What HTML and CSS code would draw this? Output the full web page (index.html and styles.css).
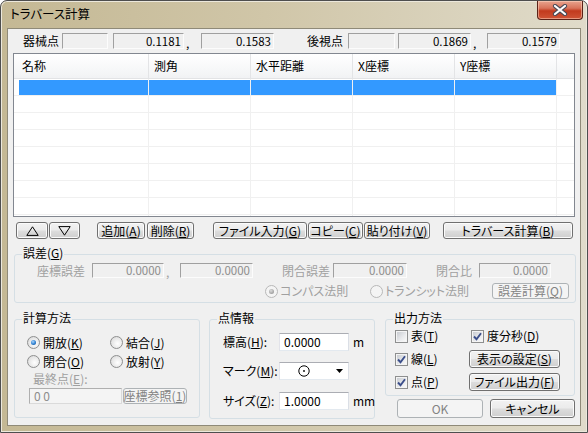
FILE: index.html
```html
<!DOCTYPE html>
<html lang="ja">
<head>
<meta charset="utf-8">
<title>トラバース計算</title>
<link rel="stylesheet" href="styles.css">
</head>
<body>
<div class="window">
  <div class="titlebar">
    <span class="title">トラバース計算</span>
    <div class="close">
      <svg width="16" height="12" viewBox="0 0 16 12"><path d="M3 2 L13 10 M13 2 L3 10" stroke="#4a4a55" stroke-width="4.2" stroke-linecap="round"/><path d="M3 2 L13 10 M13 2 L3 10" stroke="#fff" stroke-width="2.2" stroke-linecap="round"/></svg>
    </div>
  </div>
  <div class="client">
    <div class="toprow">
      <span class="lbl l1">器械点</span>
      <span class="sbox w46"></span>
      <span class="sbox w71 ml5">0.1181</span>
      <span class="comma">,</span>
      <span class="sbox w73">0.1583</span>
      <span class="lbl l2">後視点</span>
      <span class="sbox w47"></span>
      <span class="sbox w73 ml3">0.1869</span>
      <span class="comma c2">,</span>
      <span class="sbox w73">0.1579</span>
    </div>

    <div class="list">
      <div class="lhead">
        <div class="hc c1">名称</div>
        <div class="hc c2w">測角</div>
        <div class="hc c2w">水平距離</div>
        <div class="hc c2w">X座標</div>
        <div class="hc c2w">Y座標</div>
        <div class="hc c6"></div>
      </div>
      <div class="lrow selected">
        <div class="cell c1"><div class="sel first"></div></div>
        <div class="cell c2w"><div class="sel"></div></div>
        <div class="cell c2w"><div class="sel"></div></div>
        <div class="cell c2w"><div class="sel"></div></div>
        <div class="cell c2w"><div class="sel"></div></div>
        <div class="cell c6"></div>
      </div>
      <div class="lrow"><div class="cell c1"></div><div class="cell c2w"></div><div class="cell c2w"></div><div class="cell c2w"></div><div class="cell c2w"></div><div class="cell c6"></div></div>
      <div class="lrow"><div class="cell c1"></div><div class="cell c2w"></div><div class="cell c2w"></div><div class="cell c2w"></div><div class="cell c2w"></div><div class="cell c6"></div></div>
      <div class="lrow"><div class="cell c1"></div><div class="cell c2w"></div><div class="cell c2w"></div><div class="cell c2w"></div><div class="cell c2w"></div><div class="cell c6"></div></div>
      <div class="lrow"><div class="cell c1"></div><div class="cell c2w"></div><div class="cell c2w"></div><div class="cell c2w"></div><div class="cell c2w"></div><div class="cell c6"></div></div>
      <div class="lrow"><div class="cell c1"></div><div class="cell c2w"></div><div class="cell c2w"></div><div class="cell c2w"></div><div class="cell c2w"></div><div class="cell c6"></div></div>
      <div class="lrow"><div class="cell c1"></div><div class="cell c2w"></div><div class="cell c2w"></div><div class="cell c2w"></div><div class="cell c2w"></div><div class="cell c6"></div></div>
      <div class="lrow"><div class="cell c1"></div><div class="cell c2w"></div><div class="cell c2w"></div><div class="cell c2w"></div><div class="cell c2w"></div><div class="cell c6"></div></div>
      <div class="lrow"><div class="cell c1"></div><div class="cell c2w"></div><div class="cell c2w"></div><div class="cell c2w"></div><div class="cell c2w"></div><div class="cell c6"></div></div>
    </div>

    <div class="btnrow">
      <span class="btn b-up"><svg width="13" height="10" viewBox="0 0 13 10"><path d="M6.5 0.8 L12.2 9.4 H0.8 Z" fill="none" stroke="#000" stroke-width="1"/></svg></span>
      <span class="btn b-down"><svg width="13" height="10" viewBox="0 0 13 10"><path d="M6.5 9.2 L12.2 0.6 H0.8 Z" fill="none" stroke="#000" stroke-width="1"/></svg></span>
      <span class="btn b-add">追加(<u>A</u>)</span>
      <span class="btn b-del">削除(<u>R</u>)</span>
      <span class="btn b-file">ファイル入力(<u>G</u>)</span>
      <span class="btn b-copy">コピー(<u>C</u>)</span>
      <span class="btn b-paste">貼り付け(<u>V</u>)</span>
      <span class="btn b-calc">トラバース計算(<u>B</u>)</span>
    </div>

    <div class="group g-err">
      <span class="legend">誤差(<u>G</u>)</span>
      <div class="errrow1">
        <span class="dlbl w70">座標誤差</span>
        <span class="sbox dis w72 ml7">0.0000</span>
        <span class="comma dcomma">,</span>
        <span class="sbox dis w73">0.0000</span>
        <span class="dlbl w77">閉合誤差</span>
        <span class="sbox dis w74 ml3">0.0000</span>
        <span class="dlbl w65">閉合比</span>
        <span class="sbox dis w72 ml7">0.0000</span>
      </div>
      <div class="errrow2">
        <span class="ritem ri-compass"><span class="radio checked disabled"></span><span class="dtext">コンパス法則</span></span>
        <span class="ritem ri-transit"><span class="radio disabled"></span><span class="dtext">トランシット法則</span></span>
        <span class="btn disabled b-errcalc">誤差計算(<u>Q</u>)</span>
      </div>
    </div>

    <div class="bottom">
      <div class="group g-calc">
        <span class="legend">計算方法</span>
        <div class="rrow">
          <span class="ritem ri-a"><span class="radio checked"></span>開放(<u>K</u>)</span>
          <span class="ritem"><span class="radio"></span>結合(<u>J</u>)</span>
        </div>
        <div class="rrow">
          <span class="ritem ri-a"><span class="radio"></span>閉合(<u>O</u>)</span>
          <span class="ritem"><span class="radio"></span>放射(<u>Y</u>)</span>
        </div>
        <div class="lastlbl">最終点(<u>E</u>):</div>
        <div class="lastrow">
          <span class="tbox dis-tbox">0 0</span>
          <span class="btn disabled b-ref">座標参照(<u>1</u>)</span>
        </div>
      </div>

      <div class="group g-pt">
        <span class="legend">点情報</span>
        <div class="prow">
          <span class="plbl">標高(<u>H</u>):</span>
          <span class="tbox">0.0000</span>
          <span class="unit">m</span>
        </div>
        <div class="prow pr2">
          <span class="plbl">マーク(<u>M</u>):</span>
          <span class="tbox select">
            <svg class="mark" width="12" height="12" viewBox="0 0 12 12"><circle cx="6" cy="6" r="5.2" fill="none" stroke="#000" stroke-width="1"/><circle cx="6" cy="6" r="0.9" fill="#000"/></svg>
            <svg class="arrow" width="7" height="4" viewBox="0 0 7 4"><path d="M0 0 H7 L3.5 4 Z" fill="#000"/></svg>
          </span>
        </div>
        <div class="prow pr3">
          <span class="plbl">サイズ(<u>Z</u>):</span>
          <span class="tbox">1.0000</span>
          <span class="unit">mm</span>
        </div>
      </div>

      <div class="colc">
        <div class="group g-out">
          <span class="legend">出力方法</span>
          <div class="outgrid">
            <span class="citem"><span class="check"></span>表(<u>T</u>)</span>
            <span class="citem"><span class="check on"><svg width="9" height="9" viewBox="0 0 9 9"><path d="M1 4.5 L3.5 7.2 L8 1.2" fill="none" stroke="#3b4e8a" stroke-width="1.9"/></svg></span>度分秒(<u>D</u>)</span>
            <span class="citem"><span class="check on"><svg width="9" height="9" viewBox="0 0 9 9"><path d="M1 4.5 L3.5 7.2 L8 1.2" fill="none" stroke="#3b4e8a" stroke-width="1.9"/></svg></span>線(<u>L</u>)</span>
            <span class="btn b-disp">表示の設定(<u>S</u>)</span>
            <span class="citem"><span class="check on"><svg width="9" height="9" viewBox="0 0 9 9"><path d="M1 4.5 L3.5 7.2 L8 1.2" fill="none" stroke="#3b4e8a" stroke-width="1.9"/></svg></span>点(<u>P</u>)</span>
            <span class="btn b-disp">ファイル出力(<u>F</u>)</span>
          </div>
        </div>
        <div class="okrow">
          <span class="btn disabled b-ok">OK</span>
          <span class="btn b-cancel">キャンセル</span>
        </div>
      </div>
    </div>
  </div>
</div>
</body>
</html>
```
FILE: styles.css
```css
* { box-sizing: border-box; }
html, body { margin: 0; padding: 0; }
body {
  width: 588px; height: 433px; overflow: hidden; background: #fff;
  font-family: "Noto Sans CJK JP", "Noto Sans", sans-serif;
  font-size: 12px; color: #000;
  font-feature-settings: "palt";
}
u { text-decoration: underline; text-underline-offset: 1px; }

.window {
  width: 588px; height: 433px;
  border: 1px solid #4e4e4e;
  border-radius: 7px 7px 0 0;
  background: linear-gradient(90deg, #c4b894 0%, #d0c6a8 45%, #e0dbca 100%);
  display: flex; flex-direction: column;
  box-shadow: inset 0 0 0 1px #ece8dc;
}
.titlebar { height: 27px; display: flex; align-items: flex-start; flex: none; }
.title { margin: 5px 0 0 9px; font-size: 12.5px; line-height: 16px; color: #000; }
.close {
  margin-left: auto; margin-right: 4px;
  width: 46px; height: 19px;
  border: 1px solid #5a2218; border-top: none;
  border-radius: 0 0 4px 4px;
  background: linear-gradient(#e8a48e 0%, #d8735a 40%, #c23a1e 55%, #cf5436 100%);
  box-shadow: inset 0 0 0 1px rgba(255,220,200,.5);
  display: flex; align-items: center; justify-content: center;
}

.client {
  flex: none; margin: 0 6px;
  width: 574px; height: 398px;
  border: 1px solid #8f8a78;
  background: #f0f0f0;
}

/* top row */
.toprow { display: flex; align-items: center; height: 16px; margin-top: 4px; }
.lbl { line-height: 14px; white-space: nowrap; }
.l1 { margin-left: 15px; width: 39px; }
.l2 { margin-left: 33px; width: 41px; }
.sbox {
  height: 16px; line-height: 14px;
  border: 1px solid; border-color: #a0a0a0 #fcfcfc #fcfcfc #a0a0a0;
  text-align: right; padding-right: 2px; font-size: 11.5px;
  flex: none;
}
.w46 { width: 46px; } .w47 { width: 47px; } .w71 { width: 71px; }
.w72 { width: 72px; } .w73 { width: 73px; } .w74 { width: 74px; }
.ml3 { margin-left: 3px; } .ml5 { margin-left: 5px; } .ml7 { margin-left: 7px; }
.comma { width: 17px; padding-left: 2px; align-self: flex-end; line-height: 12px; font-size: 12px; }
.comma.c2 { width: 16px; }

/* list */
.list {
  margin: 4px 0 0 5px; width: 562px; height: 164px;
  border: 1px solid #828790; background: #fff; overflow: hidden;
}
.lhead {
  display: flex; height: 25px;
  background: linear-gradient(#ffffff 0%, #f7f8f9 60%, #f1f2f4 100%);
  border-bottom: 1px solid #e2e3e5;
}
.hc { border-right: 1px solid #e3e4e6; line-height: 24px; padding-left: 5px; white-space: nowrap; font-size: 12px; }
.c1 { width: 135px; flex: none; }
.hc.c1 { padding-left: 8px; }
.c2w { width: 102px; flex: none; }
.c6 { flex: 1; border-right: none; }
.lrow { display: flex; height: 17px; border-bottom: 1px solid #f0f0f0; }
.cell { border-right: 1px solid #f0f0f0; height: 16px; }
.cell.c6 { border-right: none; }
.sel { margin-top: 1px; height: 15px; background: #3399ff; }
.sel.first { margin-left: 5px; }

/* buttons */
.btn {
  display: inline-flex; align-items: center; justify-content: center;
  flex: none; height: 17px;
  border: 1px solid #707070; border-radius: 3px;
  background: linear-gradient(#f2f2f2 0%, #ebebeb 48%, #dddddd 52%, #cfcfcf 100%);
  box-shadow: inset 0 0 0 1px #fbfbfb;
  line-height: 14px; white-space: nowrap; font-size: 12px;
}
.btn.disabled {
  border-color: #adb2b5; background: #f4f4f4; box-shadow: none; color: #838383;
}
.btnrow { display: flex; margin-top: 5px; height: 17px; }
.b-up { margin-left: 8px; width: 32px; }
.b-down { margin-left: 1px; width: 31px; }
.b-add { margin-left: 17px; width: 48px; }
.b-del { margin-left: 2px; width: 47px; }
.b-file { margin-left: 19px; width: 94px; }
.b-copy { margin-left: 1px; width: 55px; }
.b-paste { margin-left: 1px; width: 66px; }
.b-calc { margin-left: 13px; width: 130px; }

/* group boxes */
.group {
  position: relative; flex: none;
  border: 1px solid #d5dfe5; border-radius: 3px;
}
.legend {
  position: absolute; top: -9px; left: 7px;
  padding: 0 1px; background: #f0f0f0; line-height: 14px; white-space: nowrap;
}
.g-err { margin: 15px 0 0 6px; width: 562px; height: 49px; }
.errrow1 { display: flex; align-items: center; height: 15px; margin-top: 8px; }
.errrow1 .sbox { height: 15px; line-height: 13px; }
.sbox.dis { color: #8d8d8d; }
.dlbl { color: #a0a0a0; text-align: right; line-height: 14px; flex: none; white-space: nowrap; }
.w70 { width: 70px; } .w77 { width: 77px; } .w65 { width: 65px; }
.dcomma { width: 16px; color: #a0a0a0; }
.errrow2 { display: flex; align-items: center; height: 16px; margin-top: 5px; }
.errrow2 .btn { height: 16px; }
.ritem { display: inline-flex; align-items: center; white-space: nowrap; flex: none; line-height: 14px; }
.ri-compass { margin-left: 250px; width: 105px; }
.ri-transit { width: 122px; }
.dtext { color: #a0a0a0; }
.b-errcalc { width: 77px; }

.radio {
  width: 13px; height: 13px; border-radius: 50%; flex: none;
  border: 1px solid #8e8f8f; margin-right: 2px;
  background: radial-gradient(circle at 60% 60%, #ffffff 0%, #e6e6e6 60%, #cfcfcf 100%);
  position: relative;
}
.radio.checked::after {
  content: ""; position: absolute; left: 3px; top: 3px; width: 5px; height: 5px; border-radius: 50%;
  background: radial-gradient(circle at 40% 35%, #a8d6ff 0%, #2d7fd0 55%, #10457f 100%);
}
.radio.disabled { border-color: #b8b8b8; background: #f4f4f4; }
.radio.checked.disabled::after { background: radial-gradient(circle at 40% 35%, #dcdcdc 0%, #a8a8a8 60%, #8c8c8c 100%); }

.bottom { display: flex; align-items: flex-start; margin-top: 16px; }
.g-calc { margin-left: 6px; width: 186px; height: 99px; padding-top: 13px; }
.rrow { display: flex; align-items: center; height: 19px; padding-left: 12px; }
.ri-a { width: 83px; }
.rrow .radio { margin-right: 3px; }
.lastlbl { color: #a0a0a0; padding-left: 18px; line-height: 16px; height: 16px; }
.lastrow { display: flex; margin-top: 1px; padding-left: 14px; }
.tbox {
  display: inline-flex; align-items: center; flex: none;
  height: 18px; width: 70px; padding-left: 4px;
  border: 1px solid #abadb3; border-color: #abadb3 #dbdfe6 #e3e9ef #e2e3ea;
  background: #fff; line-height: 14px;
}
.dis-tbox { width: 93px; height: 16px; background: #f4f4f4; color: #8d8d8d; border-color: #afafaf #dadada #dadada #afafaf; }
.b-ref { margin-left: 1px; width: 64px; height: 16px; }

.g-pt { margin-left: 9px; width: 166px; height: 100px; padding-top: 13px; }
.prow { display: flex; align-items: center; height: 18px; }
.pr2 { margin-top: 11px; }
.pr3 { margin-top: 12px; }
.plbl { width: 69px; padding-left: 13px; white-space: nowrap; line-height: 14px; flex: none; }
.unit { margin-left: 4px; line-height: 14px; }
.select { position: relative; }
.select .mark { margin-left: 14px; }
.select .arrow { margin-left: auto; margin-right: 5px; }

.colc { margin-left: 10px; width: 190px; flex: none; }
.g-out { width: 190px; height: 77px; padding: 7px 0 0 9px; }
.outgrid { display: grid; grid-template-columns: 76px 93px; grid-auto-rows: 18px; row-gap: 5px; }
.citem { display: flex; align-items: center; white-space: nowrap; line-height: 14px; }
.check {
  width: 13px; height: 13px; flex: none; margin-right: 3px;
  border: 1px solid #8e8f8f; background: #f4f4f4;
  position: relative; display: flex; align-items: center; justify-content: center;
}
.check::before {
  content: ""; position: absolute; left: 1px; top: 1px; width: 9px; height: 9px;
  background: linear-gradient(135deg, #c9ccd1 0%, #e9eaec 60%, #f8f8f8 100%);
}
.check svg { position: relative; }
.b-disp { margin-left: -2px; width: 91px; height: 18px; }
.okrow { display: flex; margin-top: 3px; }
.b-ok { margin-left: 12px; width: 86px; height: 19px; }
.b-cancel { margin-left: 7px; width: 85px; height: 19px; }
```
